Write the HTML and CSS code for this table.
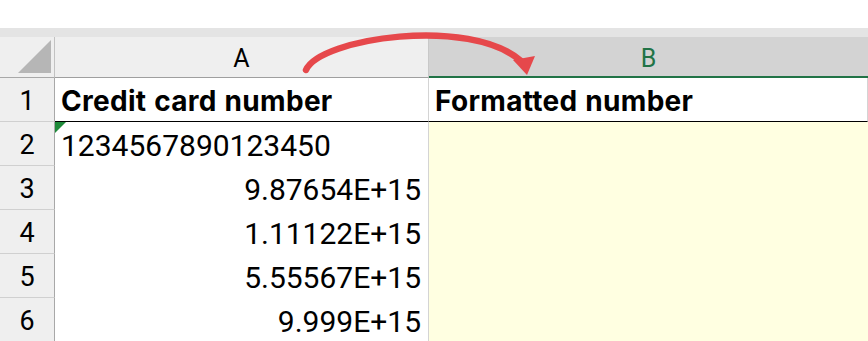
FILE: index.html
```html
<!DOCTYPE html>
<html>
<head>
    <title>Credit card numbers</title>
    <link rel="stylesheet" href="styles.css">
</head>
<body>
    <div class="top-space"></div>
    <div class="ribbon-edge"></div>

    <div class="sheet-wrap">
        <div class="sheet">
            <!-- column headers -->
            <div class="corner"><span class="corner-mark"></span></div>
            <div class="col-head">A</div>
            <div class="col-head selected">B</div>

            <!-- row 1 -->
            <div class="row-head">1</div>
            <div class="cell title">Credit card number</div>
            <div class="cell title">Formatted number</div>

            <!-- row 2 -->
            <div class="row-head">2</div>
            <div class="cell text"><span class="err-mark"></span>1234567890123450</div>
            <div class="cell fill"></div>

            <div class="row-head">3</div>
            <div class="cell num">9.87654E+15</div>
            <div class="cell fill"></div>

            <div class="row-head">4</div>
            <div class="cell num">1.11122E+15</div>
            <div class="cell fill"></div>

            <div class="row-head">5</div>
            <div class="cell num">5.55567E+15</div>
            <div class="cell fill"></div>

            <div class="row-head">6</div>
            <div class="cell num">9.999E+15</div>
            <div class="cell fill"></div>
        </div>

        <!-- arrow from column A over to column B -->
        <svg class="arrow" width="868" height="90" viewBox="0 0 868 90">
            <path d="M306 70 C 320 38, 470 16, 521 61" fill="none" stroke="#e6484b" stroke-width="6.5" stroke-linecap="round"/>
            <polygon points="513,60 535,56 527,75" fill="#e6484b"/>
        </svg>
    </div>
</body>
</html>
```

FILE: styles.css
```css
body {
    margin: 0;
    background: #fff;
    font-family: Roboto, "Liberation Sans", sans-serif;
    font-variant-numeric: tabular-nums;
    color: #000;
}
.top-space {
    height: 28px;
}
.ribbon-edge {
    height: 9px;
    background: #e4e4e4;
}
.sheet-wrap {
    position: relative;
}
.sheet {
    display: grid;
    grid-template-columns: 55px 374px 1fr;
    grid-template-rows: 41px repeat(6, 44px);
}
.corner {
    background: #efefef;
    border-right: 1px solid #c2c2c2;
    border-bottom: 1px solid #a8a8a8;
    display: flex;
    justify-content: flex-end;
    align-items: flex-end;
    padding: 0 3px 4px 0;
}
.corner-mark {
    width: 33px;
    height: 33px;
    background: #b6b6b6;
    clip-path: polygon(100% 0, 100% 100%, 0 100%);
}
.col-head {
    background: #efefef;
    border-right: 1px solid #c8c8c8;
    border-bottom: 1px solid #9f9f9f;
    display: flex;
    justify-content: center;
    align-items: center;
    font-size: 25px;
    padding-top: 3px;
}
.col-head.selected {
    background: #d3d3d3;
    border-right: none;
    border-bottom: 2px solid #217346;
    color: #217346;
}
.row-head {
    background: #efefef;
    border-right: 1px solid #a8a8a8;
    border-bottom: 1px solid #d0d0d0;
    display: flex;
    justify-content: center;
    align-items: center;
    font-size: 27px;
    padding-top: 2px;
}
.cell {
    position: relative;
    display: flex;
    align-items: center;
    padding: 2px 7px 0 6px;
    font-size: 30px;
    border-right: 1px solid #d4d4d4;
}
.cell.title {
    font-family: Inter, "Liberation Sans", sans-serif;
    font-weight: 700;
    font-size: 28px;
    letter-spacing: 0.3px;
    border-bottom: 1px solid #000;
}
.cell.num {
    justify-content: flex-end;
}
.cell.fill {
    background: #ffffe1;
    border-right: none;
}
.err-mark {
    position: absolute;
    left: 0;
    top: 0;
    width: 11px;
    height: 11px;
    background: #1f8a3a;
    clip-path: polygon(0 0, 100% 0, 0 100%);
}
.arrow {
    position: absolute;
    left: 0;
    top: -37px;
    pointer-events: none;
}
```
